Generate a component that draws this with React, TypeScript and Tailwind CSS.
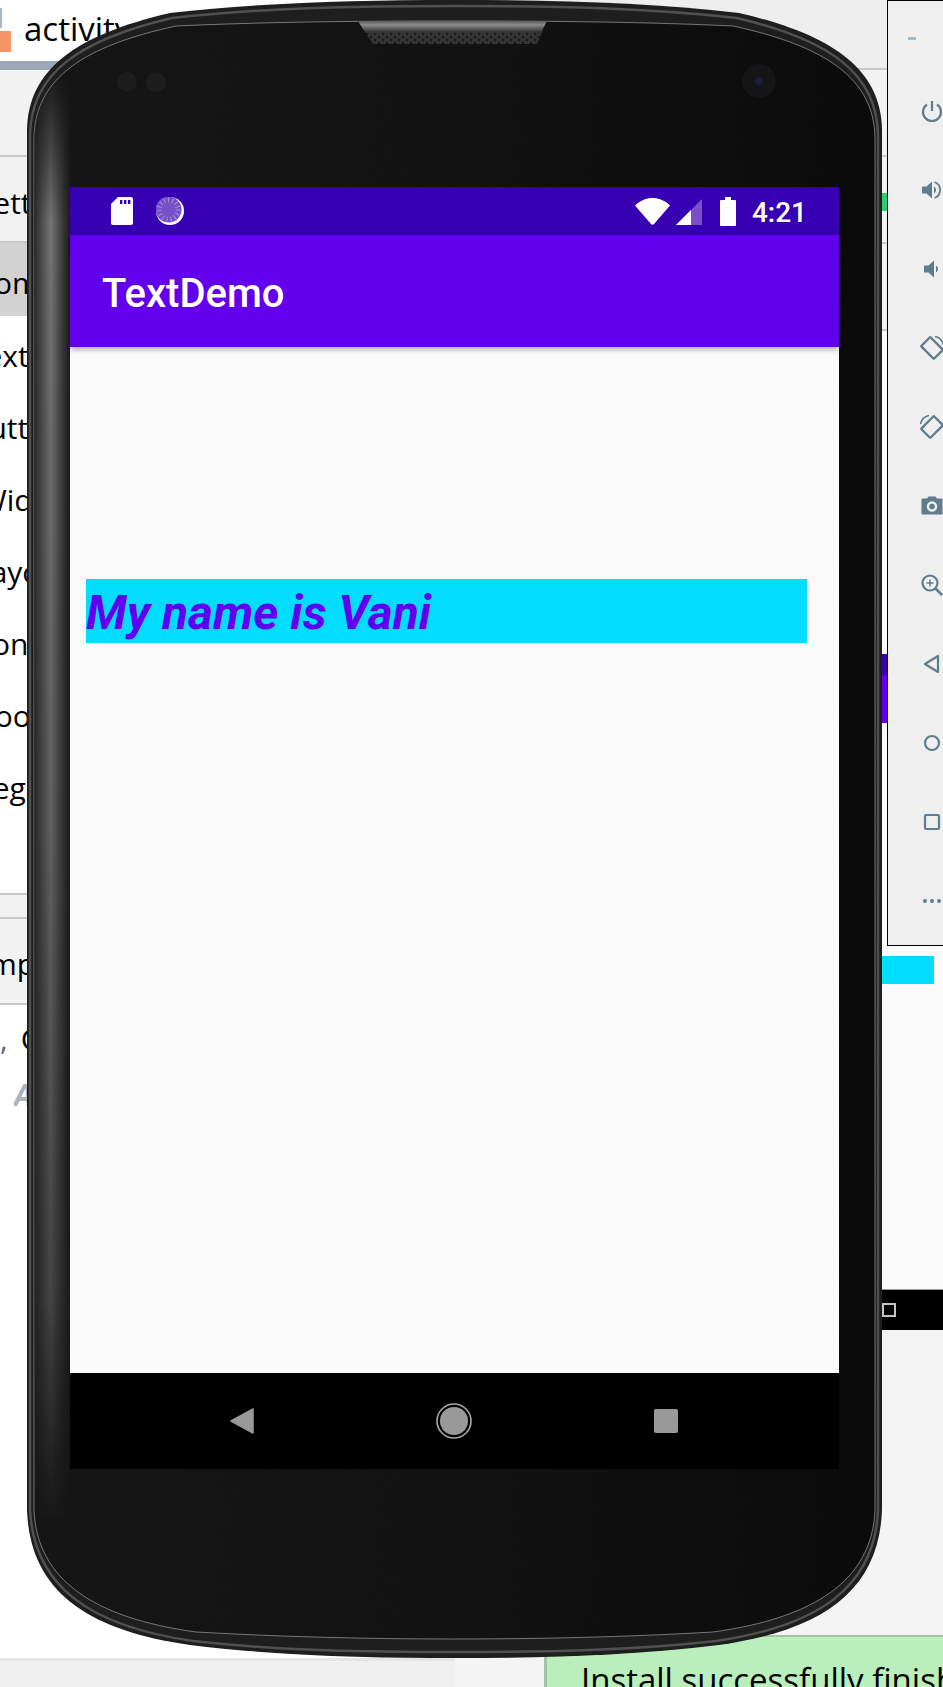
const ICON = "#5f7d8c";

function PhoneBody() {
  const outer =
    "M27 130C28 70 75 35 170 13C260 3 350 0 455 0C560 0 650 3 739 13C834 35 881 70 882 130L882 1510C879 1590 824 1630 719 1645C630 1656 540 1658 455 1658C370 1658 280 1656 190 1645C85 1630 30 1590 27 1510Z";
  const rimA =
    "M30 135C31 74 78 40 172 18C262 8 350 6 455 6C560 6 648 8 737 18C831 40 877 74 878 135L878 1510C875 1586 820 1626 716 1641C628 1651 540 1652 455 1652C370 1652 282 1651 193 1641C89 1626 34 1586 30 1510Z";
  const rimB =
    "M34 138C35 78 84 46 176 26C264 22 350 21 455 21C560 21 646 22 733 26C825 46 874 78 875 138L875 1510C872 1580 815 1618 713 1632C626 1637 540 1639 455 1639C370 1639 284 1637 196 1632C94 1618 37 1580 34 1510Z";
  return (
    <svg className="absolute inset-0" width="856" height="1660" viewBox="27 0 856 1660">
      <defs>
        <linearGradient id="bodyFill" x1="0" x2="1" y1="0" y2="0">
          <stop offset="0" stopColor="#151515" />
          <stop offset="0.55" stopColor="#111111" />
          <stop offset="1" stopColor="#0a0a0a" />
        </linearGradient>
        <linearGradient id="sideStrip" gradientUnits="userSpaceOnUse" x1="35" x2="70" y1="0" y2="0">
          <stop offset="0" stopColor="#2e2e2e" />
          <stop offset="0.45" stopColor="#747474" />
          <stop offset="0.8" stopColor="#383838" />
          <stop offset="1" stopColor="#1c1c1c" />
        </linearGradient>
        <linearGradient id="stripFade" x1="0" x2="0" y1="0" y2="1">
          <stop offset="0" stopColor="#000" />
          <stop offset="0.1" stopColor="#fff" />
          <stop offset="0.5" stopColor="#cfcfcf" />
          <stop offset="0.82" stopColor="#808080" />
          <stop offset="0.97" stopColor="#000" />
        </linearGradient>
        <mask id="stripMask" maskUnits="userSpaceOnUse" x="30" y="60" width="50" height="1520">
          <rect x="30" y="70" width="50" height="1500" fill="url(#stripFade)" />
        </mask>
        <clipPath id="bodyClip">
          <path d={rimB} />
        </clipPath>
        <linearGradient id="notchBand" x1="0" x2="0" y1="0" y2="1">
          <stop offset="0" stopColor="#5a5a5a" />
          <stop offset="0.35" stopColor="#8c8c8c" />
          <stop offset="1" stopColor="#333333" />
        </linearGradient>
        <pattern id="speaker" width="8" height="6" patternUnits="userSpaceOnUse" x="373" y="32">
          <rect width="8" height="6" fill="#333333" />
          <circle cx="2" cy="2" r="1.1" fill="#141414" />
          <circle cx="6" cy="5" r="1.1" fill="#141414" />
        </pattern>
        <filter id="grain">
          <feTurbulence type="fractalNoise" baseFrequency="0.9" numOctaves="2" />
          <feColorMatrix values="0 0 0 0 1  0 0 0 0 1  0 0 0 0 1  0.5 0 0 0 -0.2" />
          <feComposite in2="SourceGraphic" operator="in" />
        </filter>
      </defs>
      <path d={outer} fill="#1e1e1e" />
      <path d={rimA} fill="none" stroke="#7a7a7a" strokeWidth="2.5" opacity="0.55" />
      <path d={rimB} fill="url(#bodyFill)" stroke="#c4c4c4" strokeWidth="1" strokeOpacity="0.55" />
      <path d={rimB} fill="#fff" opacity="0.07" filter="url(#grain)" />
      <g clipPath="url(#bodyClip)">
        <rect x="30" y="70" width="40" height="1500" fill="url(#sideStrip)" mask="url(#stripMask)" />
      </g>
      <path d="M358 21L547 21L537 44L373 44Z" fill="url(#speaker)" />
      <path d="M358 21L547 21L541 32L365 32Z" fill="url(#notchBand)" />
      <circle cx="127" cy="82" r="10" fill="#1d1d1d" />
      <circle cx="156" cy="82" r="10" fill="#1d1d1d" />
      <circle cx="759" cy="81" r="17" fill="#151517" />
      <circle cx="759" cy="81" r="4" fill="#1b1b3c" />
    </svg>
  );
}

function StatusBar() {
  return (
    <div className="flex h-[48px] items-center bg-[#3700b3] pl-[41px] pr-[32px] text-white">
      <svg width="22" height="28" viewBox="0 0 22 28">
        <path d="M7 0H20Q22 0 22 2V26Q22 28 20 28H2Q0 28 0 26V7Z" fill="#fff" />
        <rect x="9" y="3" width="2.4" height="4" fill="#3700b3" />
        <rect x="13" y="3" width="2.4" height="4" fill="#3700b3" />
        <rect x="17" y="3" width="2.4" height="4" fill="#3700b3" />
      </svg>
      <svg className="ml-[23px]" width="28" height="28" viewBox="0 0 28 28">
        <circle cx="14" cy="14" r="14" fill="#fff" />
        <circle cx="12.6" cy="12.6" r="13" fill="#7650c6" />
        <circle cx="12.6" cy="12.6" r="9.5" fill="none" stroke="#a58fdc" strokeWidth="5" strokeDasharray="1 3" />
      </svg>
      <div className="flex-1" />
      <svg width="35" height="27" viewBox="0 0 35 27">
        <path d="M0 7.5C5 2.5 11 0 17.5 0S30 2.5 35 7.5L19 26Q17.5 27.5 16 26Z" fill="#fff" />
      </svg>
      <svg className="ml-[6px] mt-[2px]" width="26" height="26" viewBox="0 0 26 26">
        <path d="M0 26L26 0V26Z" fill="#7a50c9" />
        <path d="M0 26L15 11V26Z" fill="#fff" />
      </svg>
      <svg className="ml-[18px]" width="16" height="29" viewBox="0 0 16 29">
        <path d="M5 0H11V3H15Q16 3 16 4V28Q16 29 15 29H1Q0 29 0 28V4Q0 3 1 3H5Z" fill="#fff" />
      </svg>
      <span className="ml-[16px] mt-[4px] font-['Roboto',sans-serif] text-[28px] font-medium leading-none">4:21</span>
    </div>
  );
}

function NavBar() {
  return (
    <div className="flex h-[96px] items-center bg-black pl-[160px]">
      <svg width="24" height="26" viewBox="0 0 24 26">
        <path d="M23 1L1 13L23 25Z" fill="#999" stroke="#999" strokeWidth="1.5" strokeLinejoin="round" />
      </svg>
      <svg className="ml-[182px]" width="36" height="36" viewBox="0 0 36 36">
        <circle cx="18" cy="18" r="17" fill="none" stroke="#a8a8a8" strokeWidth="1.6" />
        <circle cx="18" cy="18" r="14" fill="#999" />
      </svg>
      <div className="ml-[182px] h-[24px] w-[24px] rounded-[2px] bg-[#999]" />
    </div>
  );
}

function Screen() {
  return (
    <div className="ml-[43px] w-[769px]">
      <StatusBar />
      <div className="relative flex h-[112px] items-center bg-[#6200ee] pl-[32px] pt-[6px] shadow-[0_2px_6px_rgba(0,0,0,0.35)]">
        <span className="font-['Roboto',sans-serif] text-[40px] font-medium text-white">TextDemo</span>
      </div>
      <div className="h-[1026px] bg-[#fafafa] pl-[16px] pr-[32px] pt-[232px]">
        <div className="flex h-[64px] items-center bg-[#00ddff] pt-[3px] font-['Roboto',sans-serif] text-[48px] font-bold italic text-[#6200ee]">
          My name is Vani
        </div>
      </div>
      <NavBar />
    </div>
  );
}

function PanelIcon({ children }: { children: React.ReactNode }) {
  return (
    <div className="flex h-[79px] w-[88px] items-center justify-center">
      <svg width="24" height="24" viewBox="0 0 24 24" fill="none" stroke={ICON} strokeWidth="2.2">
        {children}
      </svg>
    </div>
  );
}

function EmulatorPanel() {
  return (
    <div className="absolute left-[887px] top-0 h-[946px] w-[56px] overflow-hidden border-b border-l border-t border-black bg-[#efefef]">
      <div className="ml-[20px] mt-[36px] h-[3px] w-[8px] bg-[#a9b7c1]" />
      <div className="mt-[31px] flex flex-col">
        <PanelIcon>
          <path d="M12 2V12" />
          <path d="M7 5.5A9 9 0 1 0 17 5.5" />
        </PanelIcon>
        <PanelIcon>
          <path d="M2 8.5H6.5L12 3.5V20.5L6.5 15.5H2Z" fill={ICON} stroke="none" />
          <path d="M14 8.5A4 4 0 0 1 14 15.5V8.5Z" fill={ICON} stroke="none" />
          <path d="M14.5 4A8.5 8.5 0 0 1 14.5 20" strokeWidth="1.8" />
        </PanelIcon>
        <PanelIcon>
          <path d="M4 8.5H8.5L14 3.5V20.5L8.5 15.5H4Z" fill={ICON} stroke="none" />
          <path d="M16 8.5A4 4 0 0 1 16 15.5V8.5Z" fill={ICON} stroke="none" />
        </PanelIcon>
        <PanelIcon>
          <rect x="3" y="5.5" width="18" height="13" rx="1" transform="rotate(45 12 12)" strokeWidth="2.4" />
          <path d="M15 0.5A11 11 0 0 1 23.5 9" strokeWidth="1.6" />
        </PanelIcon>
        <PanelIcon>
          <rect x="3" y="5.5" width="18" height="13" rx="1" transform="rotate(-45 12 12)" strokeWidth="2.4" />
          <path d="M9 0.5A11 11 0 0 0 0.5 9" strokeWidth="1.6" />
        </PanelIcon>
        <PanelIcon>
          <path d="M2.5 4.5H7L8.5 2.5H15.5L17 4.5H21.5Q22.5 4.5 22.5 5.5V19.5Q22.5 20.5 21.5 20.5H2.5Q1.5 20.5 1.5 19.5V5.5Q1.5 4.5 2.5 4.5Z" fill={ICON} stroke="none" />
          <circle cx="12" cy="12.5" r="4" stroke="#efefef" strokeWidth="2.4" />
        </PanelIcon>
        <PanelIcon>
          <circle cx="10" cy="10" r="7.5" />
          <path d="M15.5 15.5L22 22" strokeWidth="2.6" />
          <path d="M10 6.5V13.5M6.5 10H13.5" strokeWidth="1.4" />
        </PanelIcon>
        <PanelIcon>
          <path d="M18 4V20L5 12Z" strokeLinejoin="round" />
        </PanelIcon>
        <PanelIcon>
          <circle cx="12" cy="12" r="7" />
        </PanelIcon>
        <PanelIcon>
          <rect x="5" y="5" width="14" height="14" rx="1" />
        </PanelIcon>
        <PanelIcon>
          <circle cx="5" cy="12" r="2" fill={ICON} stroke="none" />
          <circle cx="12" cy="12" r="2" fill={ICON} stroke="none" />
          <circle cx="19" cy="12" r="2" fill={ICON} stroke="none" />
        </PanelIcon>
      </div>
    </div>
  );
}

function PaletteRow({ label, className }: { label: string; className: string }) {
  return (
    <div className="flex h-[72px] w-[60px] items-center overflow-hidden whitespace-nowrap pt-[6px]">
      <span className={className}>{label}</span>
    </div>
  );
}

function LeftColumn() {
  return (
    <div className="w-[455px] overflow-hidden font-['Open_Sans',sans-serif] text-[30px] text-black">
      <div className="relative flex h-[61px] items-center bg-white pl-[24px]">
        <div className="absolute left-0 top-[8px] h-[20px] w-[2px] bg-[#a9b6c6]" />
        <div className="absolute left-0 top-[31px] h-[21px] w-[11px] bg-[#f79467]" />
        <span className="-mt-[3px] w-[100px] overflow-hidden whitespace-nowrap text-[33px]">activity_main</span>
      </div>
      <div className="h-[9px] bg-[#9da9b8]" />
      <div className="h-[85px] bg-[#f2f2f2]" />
      <div className="flex h-[88px] items-center border-y-2 border-[#c8c8c8] bg-[#f2f2f2] pt-[6px]">
        <span className="-ml-[49px]">Palette</span>
      </div>
      <div className="flex h-[73px] items-center bg-[#d2d2d2] pt-[6px]">
        <span className="-ml-[25px]">Common</span>
      </div>
      <div className="h-[577px] bg-white">
        <PaletteRow label="Text" className="-ml-[31px]" />
        <PaletteRow label="Buttons" className="-ml-[31px]" />
        <PaletteRow label="Widgets" className="-ml-[21px]" />
        <PaletteRow label="Layouts" className="-ml-[25px]" />
        <PaletteRow label="Containers" className="-ml-[27px]" />
        <PaletteRow label="Google" className="-ml-[27px]" />
        <PaletteRow label="Legacy" className="-ml-[23px]" />
      </div>
      <div className="h-[24px] border-t-2 border-[#c8c8c8] bg-[#f2f2f2]" />
      <div className="flex h-[88px] items-center border-y-2 border-[#c8c8c8] bg-[#f2f2f2] pt-[4px]">
        <div className="w-[60px] overflow-hidden whitespace-nowrap">
          <span className="-ml-[48px] inline-block">Component</span>
        </div>
      </div>
      <div className="h-[653px] bg-white">
        <div className="w-[60px] overflow-hidden whitespace-nowrap pt-[12px] leading-[44px]">
          <span className="mr-[13px] text-[#667]">,</span>Constraint
        </div>
        <div className="ml-[14px] mt-[16px] w-[50px] overflow-hidden whitespace-nowrap font-['Noto_Sans',sans-serif] font-bold italic leading-[36px] text-[#a9b4bf]">
          Autoconnect
        </div>
      </div>
      <div className="h-[30px] border-t-[3px] border-[#e4e4e4] bg-[#f0f0f0]" />
    </div>
  );
}

function RightColumn() {
  return (
    <div className="flex h-[1687px] flex-1 flex-col">
      <div className="h-[68px] bg-[#eeeeee]" />
      <div className="h-[87px] border-t-2 border-[#c8c8c8] bg-[#f2f2f2]" />
      <div className="h-[87px] border-t-2 border-[#c8c8c8] bg-[#f2f2f2] pr-[56px] pt-[36px]">
        <div className="ml-auto h-[18px] w-[6px] bg-[#2ecc71]" />
      </div>
      <div className="h-[87px] border-t-2 border-[#c8c8c8] bg-[#f2f2f2]" />
      <div className="h-[325px] border-t-2 border-[#c8c8c8] bg-[#fafafa]" />
      <div className="h-[21px] bg-[#3700b3]" />
      <div className="h-[48px] bg-[#6200ee]" />
      <div className="h-[233px] bg-[#fafafa]" />
      <div className="flex h-[28px] justify-end bg-[#fafafa] pr-[9px]">
        <div className="h-full w-[60px] bg-[#00ddff]" />
      </div>
      <div className="h-[305px] bg-[#fafafa]" />
      <div className="flex h-[41px] items-center border-t border-[#999] bg-black pl-[427px]">
        <div className="h-[14px] w-[14px] border-2 border-[#c4c4c4]" />
      </div>
      <div className="flex-1 bg-[#f4f4f4]" />
    </div>
  );
}

export default function App() {
  return (
    <div className="relative flex h-[1687px] w-[943px] overflow-hidden bg-white">
      <LeftColumn />
      <RightColumn />
      <EmulatorPanel />
      <div className="absolute left-[544px] top-[1635px] h-[52px] w-[399px] overflow-hidden whitespace-nowrap border-l-[3px] border-t-2 border-[#a6c2a6] bg-[#baefbb] pl-[34px] pt-[23px] font-['Open_Sans',sans-serif] text-[33px] leading-[40px] text-black">
        Install successfully finished
      </div>
      <div className="absolute left-[27px] top-0 h-[1660px] w-[856px] pt-[187px]">
        <PhoneBody />
        <div className="relative">
          <Screen />
        </div>
      </div>
    </div>
  );
}
